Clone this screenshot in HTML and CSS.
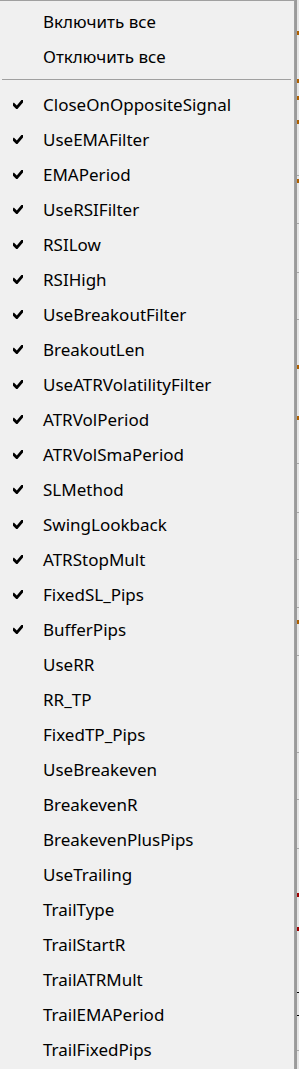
FILE: index.html
```html
<!DOCTYPE html>
<html lang="ru">
<head>
    <meta charset="UTF-8">
    <meta name="viewport" content="width=device-width, initial-scale=1.0">
    <title>Параметры</title>
    <link rel="stylesheet" href="styles.css">
</head>
<body>
    <div class="screen">
        <div class="menu">
            <div class="item"><span class="check"></span><span class="label">Включить все</span></div>
            <div class="item"><span class="check"></span><span class="label">Отключить все</span></div>
            <div class="separator"></div>

            <div class="item checked"><span class="check"><svg viewBox="0 0 10 9"><path d="M0.8 4.6 L3.8 7.6 L9.2 1.2"/></svg></span><span class="label">CloseOnOppositeSignal</span></div>
            <div class="item checked"><span class="check"><svg viewBox="0 0 10 9"><path d="M0.8 4.6 L3.8 7.6 L9.2 1.2"/></svg></span><span class="label">UseEMAFilter</span></div>
            <div class="item checked"><span class="check"><svg viewBox="0 0 10 9"><path d="M0.8 4.6 L3.8 7.6 L9.2 1.2"/></svg></span><span class="label">EMAPeriod</span></div>
            <div class="item checked"><span class="check"><svg viewBox="0 0 10 9"><path d="M0.8 4.6 L3.8 7.6 L9.2 1.2"/></svg></span><span class="label">UseRSIFilter</span></div>
            <div class="item checked"><span class="check"><svg viewBox="0 0 10 9"><path d="M0.8 4.6 L3.8 7.6 L9.2 1.2"/></svg></span><span class="label">RSILow</span></div>
            <div class="item checked"><span class="check"><svg viewBox="0 0 10 9"><path d="M0.8 4.6 L3.8 7.6 L9.2 1.2"/></svg></span><span class="label">RSIHigh</span></div>
            <div class="item checked"><span class="check"><svg viewBox="0 0 10 9"><path d="M0.8 4.6 L3.8 7.6 L9.2 1.2"/></svg></span><span class="label">UseBreakoutFilter</span></div>
            <div class="item checked"><span class="check"><svg viewBox="0 0 10 9"><path d="M0.8 4.6 L3.8 7.6 L9.2 1.2"/></svg></span><span class="label">BreakoutLen</span></div>
            <div class="item checked"><span class="check"><svg viewBox="0 0 10 9"><path d="M0.8 4.6 L3.8 7.6 L9.2 1.2"/></svg></span><span class="label">UseATRVolatilityFilter</span></div>
            <div class="item checked"><span class="check"><svg viewBox="0 0 10 9"><path d="M0.8 4.6 L3.8 7.6 L9.2 1.2"/></svg></span><span class="label">ATRVolPeriod</span></div>
            <div class="item checked"><span class="check"><svg viewBox="0 0 10 9"><path d="M0.8 4.6 L3.8 7.6 L9.2 1.2"/></svg></span><span class="label">ATRVolSmaPeriod</span></div>
            <div class="item checked"><span class="check"><svg viewBox="0 0 10 9"><path d="M0.8 4.6 L3.8 7.6 L9.2 1.2"/></svg></span><span class="label">SLMethod</span></div>
            <div class="item checked"><span class="check"><svg viewBox="0 0 10 9"><path d="M0.8 4.6 L3.8 7.6 L9.2 1.2"/></svg></span><span class="label">SwingLookback</span></div>
            <div class="item checked"><span class="check"><svg viewBox="0 0 10 9"><path d="M0.8 4.6 L3.8 7.6 L9.2 1.2"/></svg></span><span class="label">ATRStopMult</span></div>
            <div class="item checked"><span class="check"><svg viewBox="0 0 10 9"><path d="M0.8 4.6 L3.8 7.6 L9.2 1.2"/></svg></span><span class="label">FixedSL_Pips</span></div>
            <div class="item checked"><span class="check"><svg viewBox="0 0 10 9"><path d="M0.8 4.6 L3.8 7.6 L9.2 1.2"/></svg></span><span class="label">BufferPips</span></div>

            <div class="item"><span class="check"></span><span class="label">UseRR</span></div>
            <div class="item"><span class="check"></span><span class="label">RR_TP</span></div>
            <div class="item"><span class="check"></span><span class="label">FixedTP_Pips</span></div>
            <div class="item"><span class="check"></span><span class="label">UseBreakeven</span></div>
            <div class="item"><span class="check"></span><span class="label">BreakevenR</span></div>
            <div class="item"><span class="check"></span><span class="label">BreakevenPlusPips</span></div>
            <div class="item"><span class="check"></span><span class="label">UseTrailing</span></div>
            <div class="item"><span class="check"></span><span class="label">TrailType</span></div>
            <div class="item"><span class="check"></span><span class="label">TrailStartR</span></div>
            <div class="item"><span class="check"></span><span class="label">TrailATRMult</span></div>
            <div class="item"><span class="check"></span><span class="label">TrailEMAPeriod</span></div>
            <div class="item"><span class="check"></span><span class="label">TrailFixedPips</span></div>
        </div>

        <!-- край графика справа от меню -->
        <div class="chart-edge">
            <span class="mark orange" style="top: 31px"></span>
            <span class="mark orange" style="top: 79px"></span>
            <span class="mark orange" style="top: 96px"></span>
            <span class="mark orange" style="top: 120px"></span>
            <span class="mark orange" style="top: 179px"></span>
            <span class="mark orange" style="top: 365px"></span>
            <span class="mark orange" style="top: 416px"></span>
            <span class="mark orange" style="top: 620px"></span>
            <span class="mark red" style="top: 893px"></span>
            <span class="mark red" style="top: 927px"></span>
            <span class="tick" style="top: 175px"></span>
            <span class="tick" style="top: 223px"></span>
            <span class="tick" style="top: 272px"></span>
            <span class="tick" style="top: 319px"></span>
            <span class="tick" style="top: 463px"></span>
            <span class="tick" style="top: 512px"></span>
            <span class="tick" style="top: 559px"></span>
            <span class="tick" style="top: 607px"></span>
            <span class="tick" style="top: 655px"></span>
            <span class="tick" style="top: 752px"></span>
            <span class="tick" style="top: 799px"></span>
            <span class="tick" style="top: 848px"></span>
            <span class="tick dark" style="top: 992px"></span>
            <span class="tick dark" style="top: 1015px"></span>
            <span class="tick" style="top: 1050px"></span>
        </div>
    </div>
</body>
</html>
```

FILE: styles.css
```css
body {
    margin: 0;
    font-family: "Noto Sans", "Open Sans", sans-serif;
    background-color: #f0f0f0;
}

.screen {
    display: flex;
    height: 1069px;
    overflow: hidden;
}

.menu {
    width: 294px;
    flex-shrink: 0;
    padding-top: 3px;
    background-color: #f0f0f0;
    border-top: 1px solid #a0a0a0;
    border-right: 1px solid #a0a0a0;
    box-sizing: content-box;
}

.item {
    display: flex;
    align-items: center;
    height: 35px;
    font-size: 17px;
    color: #000;
}

.check {
    width: 43px;
    flex-shrink: 0;
    display: flex;
    align-items: center;
    padding-left: 13px;
    box-sizing: border-box;
}

.check svg {
    width: 10px;
    height: 9px;
    display: block;
}

.check svg path {
    fill: none;
    stroke: #000;
    stroke-width: 2.8;
    stroke-linecap: square;
}

.label {
    white-space: nowrap;
}

.separator {
    height: 1px;
    margin: 5px 3px 7px 2px;
    background-color: #a0a0a0;
}

.chart-edge {
    position: relative;
    flex: 1;
    background-color: #e6e6e6;
    border-left: 2px solid #9a9a9a;
}

.mark {
    position: absolute;
    left: 0;
    width: 3px;
    height: 4px;
}

.mark.orange {
    background-color: #b06000;
}

.mark.red {
    background-color: #a00000;
}

.tick {
    position: absolute;
    left: 0;
    width: 3px;
    height: 1px;
    background-color: #a8a8a8;
}

.tick.dark {
    background-color: #000;
}
```
